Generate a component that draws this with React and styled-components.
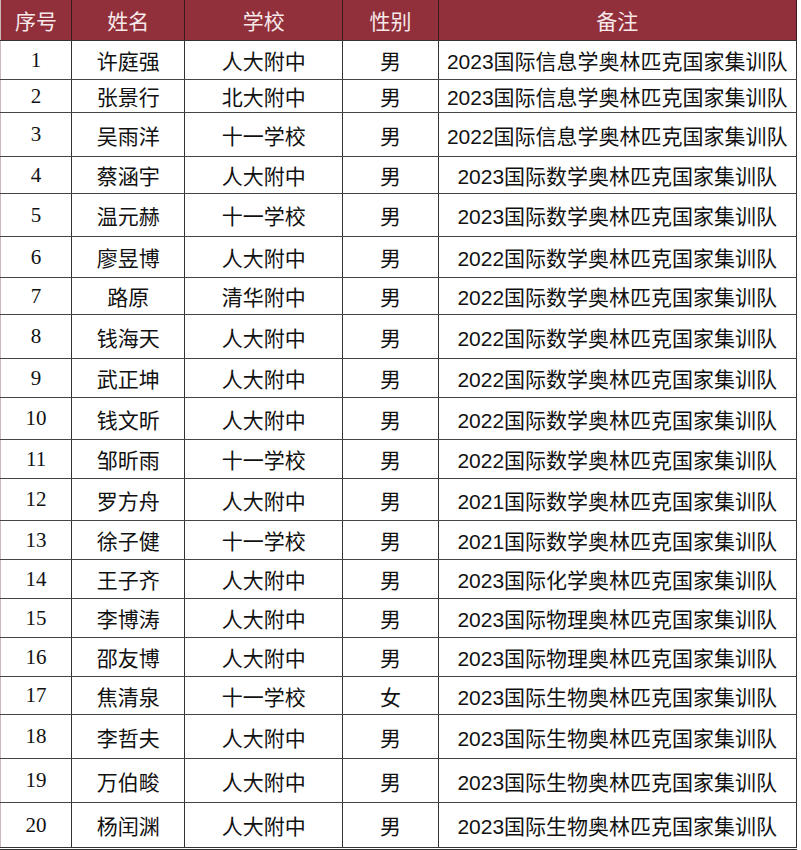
import styled, { createGlobalStyle } from 'styled-components';

const GlobalStyle = createGlobalStyle`
    body {
        margin: 0;
        background: #ffffff;
        font-family: "Liberation Serif", "Noto Sans CJK SC", serif;
    }
`

const Sheet = styled.table`
    border-collapse: collapse;
    table-layout: fixed;
    width: 797px;
    border-left: 1px solid #cdb8ba;
    border-bottom: 3px double #333;
`
const HeadCell = styled.th`
    height: ${(p) => p.$h}px;
    padding: 0;
    background-color: #912f3b;
    color: #f7e8ea;
    font-family: "Noto Sans CJK SC", sans-serif;
    font-weight: normal;
    font-size: 21px;
    text-align: center;
    border-right: 1px solid #3a1a1e;
    border-bottom: 1px solid #333;
`
const Cell = styled.td`
    height: ${(p) => p.$h}px;
    padding: 0;
    text-align: center;
    font-size: 21px;
    color: #111;
    font-family: ${(p) => (p.$num ? '"Liberation Serif", serif' : '"Liberation Sans", "Noto Sans CJK SC", sans-serif')};
    border-right: 1px solid #333;
    border-bottom: 1px solid #444;
    white-space: nowrap;
    overflow: hidden;
`

const widths = [71, 113, 158, 95, 358];
const heads = ['序号', '姓名', '学校', '性别', '备注'];

const heights = [38, 32, 43, 36, 42, 40, 36, 43, 38, 41, 38, 41, 38, 38, 38, 38, 37, 43, 43, 44];

const rows = [
    ['许庭强', '人大附中', '男', '2023国际信息学奥林匹克国家集训队'],
    ['张景行', '北大附中', '男', '2023国际信息学奥林匹克国家集训队'],
    ['吴雨洋', '十一学校', '男', '2022国际信息学奥林匹克国家集训队'],
    ['蔡涵宇', '人大附中', '男', '2023国际数学奥林匹克国家集训队'],
    ['温元赫', '十一学校', '男', '2023国际数学奥林匹克国家集训队'],
    ['廖昱博', '人大附中', '男', '2022国际数学奥林匹克国家集训队'],
    ['路原', '清华附中', '男', '2022国际数学奥林匹克国家集训队'],
    ['钱海天', '人大附中', '男', '2022国际数学奥林匹克国家集训队'],
    ['武正坤', '人大附中', '男', '2022国际数学奥林匹克国家集训队'],
    ['钱文昕', '人大附中', '男', '2022国际数学奥林匹克国家集训队'],
    ['邹昕雨', '十一学校', '男', '2022国际数学奥林匹克国家集训队'],
    ['罗方舟', '人大附中', '男', '2021国际数学奥林匹克国家集训队'],
    ['徐子健', '十一学校', '男', '2021国际数学奥林匹克国家集训队'],
    ['王子齐', '人大附中', '男', '2023国际化学奥林匹克国家集训队'],
    ['李博涛', '人大附中', '男', '2023国际物理奥林匹克国家集训队'],
    ['邵友博', '人大附中', '男', '2023国际物理奥林匹克国家集训队'],
    ['焦清泉', '十一学校', '女', '2023国际生物奥林匹克国家集训队'],
    ['李哲夫', '人大附中', '男', '2023国际生物奥林匹克国家集训队'],
    ['万伯畯', '人大附中', '男', '2023国际生物奥林匹克国家集训队'],
    ['杨闰渊', '人大附中', '男', '2023国际生物奥林匹克国家集训队'],
];

function App() {
    return (
        <>
            <GlobalStyle />
            <Sheet>
                <colgroup>
                    {widths.map((w, i) => <col key={i} style={{ width: w }} />)}
                </colgroup>
                <thead>
                    <tr>
                        {heads.map((h) => <HeadCell key={h} $h={40}>{h}</HeadCell>)}
                    </tr>
                </thead>
                <tbody>
                    {rows.map((r, i) => (
                        <tr key={i}>
                            <Cell $h={heights[i]} $num>{i + 1}</Cell>
                            {r.map((v, j) => <Cell key={j} $h={heights[i]}>{v}</Cell>)}
                        </tr>
                    ))}
                </tbody>
            </Sheet>
        </>
    )
}

export default App;
